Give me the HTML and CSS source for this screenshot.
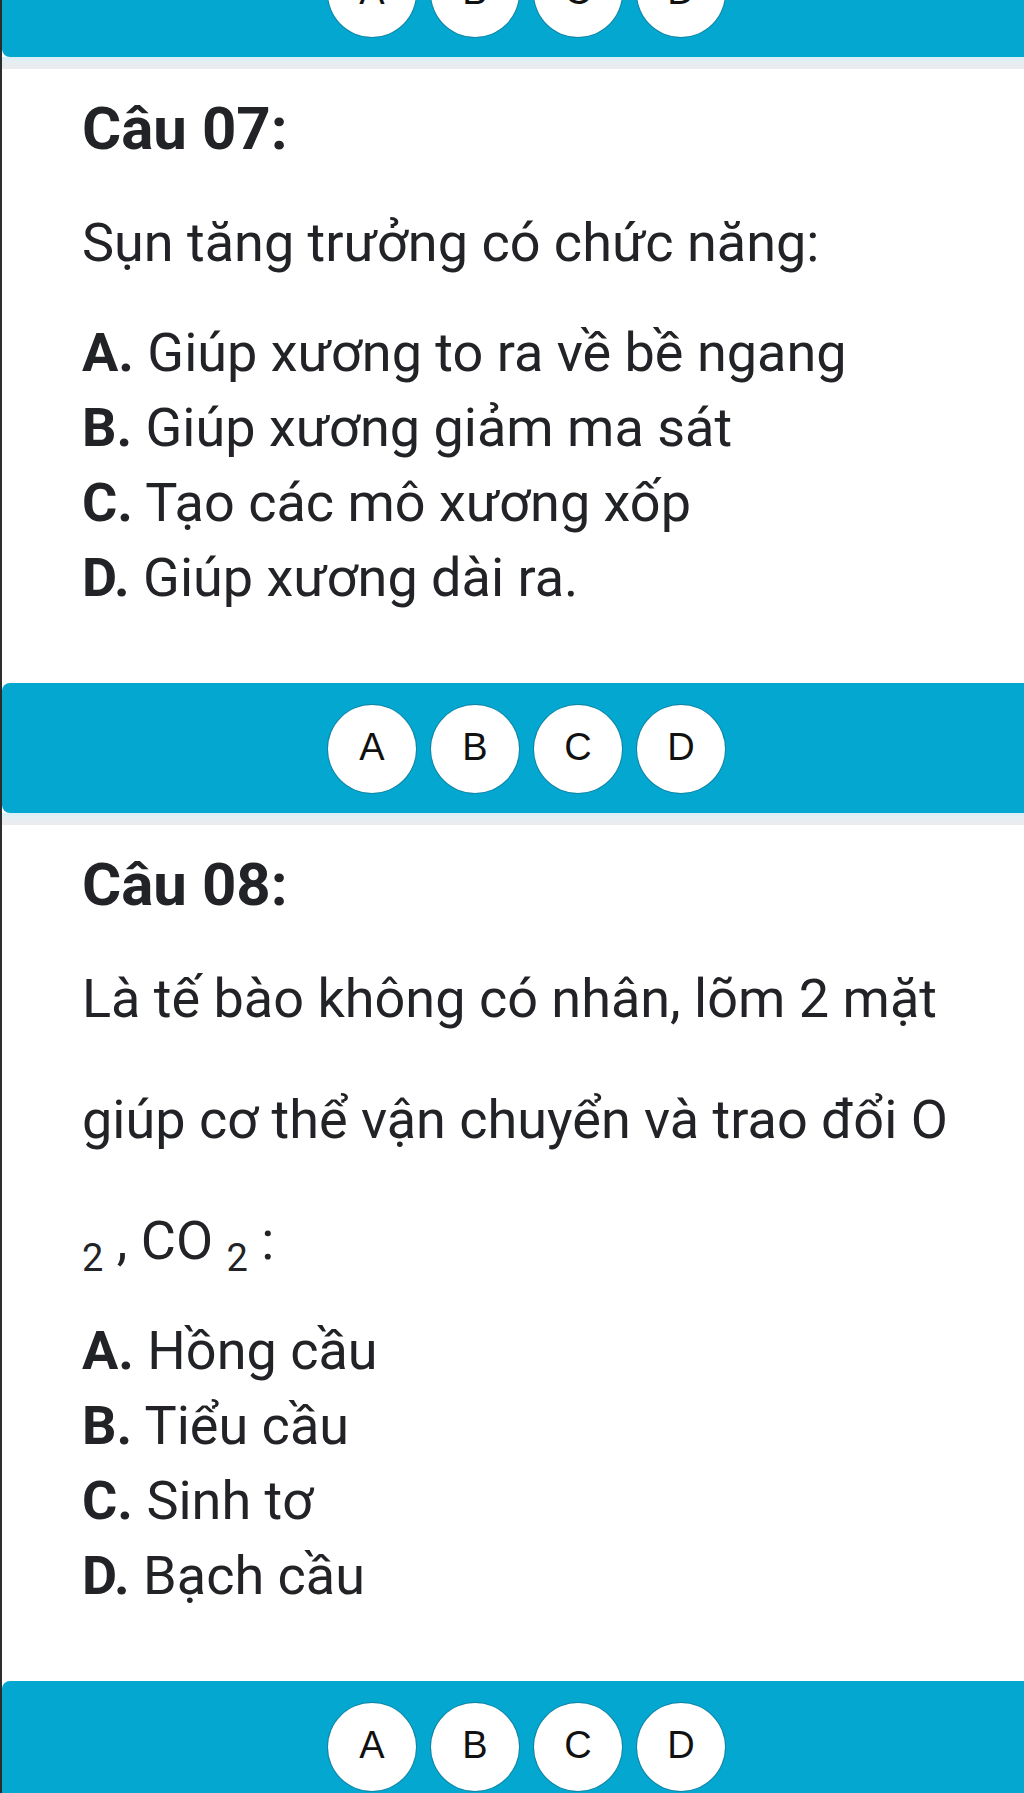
FILE: index.html
```html
<!DOCTYPE html>
<html lang="vi">
<head>
<meta charset="utf-8">
<title>Câu hỏi trắc nghiệm</title>
<link rel="stylesheet" href="styles.css">
</head>
<body>
<div class="page">
  <div class="answer-bar answer-bar--top">
    <span class="choice">A</span>
    <span class="choice">B</span>
    <span class="choice">C</span>
    <span class="choice">D</span>
  </div>
  <div class="answer-shadow"></div>

  <section class="question">
    <h2 class="question-title">Câu 07:</h2>
    <p class="question-text">Sụn tăng trưởng có chức năng:</p>
    <ul class="options">
      <li><b>A.</b> Giúp xương to ra về bề ngang</li>
      <li><b>B.</b> Giúp xương giảm ma sát</li>
      <li><b>C.</b> Tạo các mô xương xốp</li>
      <li><b>D.</b> Giúp xương dài ra.</li>
    </ul>
  </section>

  <div class="answer-bar">
    <span class="choice">A</span>
    <span class="choice">B</span>
    <span class="choice">C</span>
    <span class="choice">D</span>
  </div>
  <div class="answer-shadow"></div>

  <section class="question">
    <h2 class="question-title">Câu 08:</h2>
    <p class="question-text">Là tế bào không có nhân, lõm 2 mặt giúp cơ thể vận chuyển và trao đổi O <sub>2</sub> , CO <sub>2</sub> :</p>
    <ul class="options">
      <li><b>A.</b> Hồng cầu</li>
      <li><b>B.</b> Tiểu cầu</li>
      <li><b>C.</b> Sinh tơ</li>
      <li><b>D.</b> Bạch cầu</li>
    </ul>
  </section>

  <div class="answer-bar">
    <span class="choice">A</span>
    <span class="choice">B</span>
    <span class="choice">C</span>
    <span class="choice">D</span>
  </div>
  <div class="answer-shadow"></div>
</div>
</body>
</html>
```

FILE: styles.css
```css
html {
  overflow: hidden;
}

body {
  margin: 0;
  background: #ffffff;
  font-family: Roboto, "Noto Sans", sans-serif;
  color: #222326;
}

.page {
  border-left: 2px solid #2c2c2c;
  min-height: 1900px;
}

.answer-bar {
  display: flex;
  gap: 15px;
  height: 88px;
  padding: 22px 0 20px 326px;
  background: #03a7d0;
  border-radius: 8px 0 0 8px;
}

.answer-bar--top {
  margin-top: -73px;
}

.answer-shadow {
  height: 12px;
  background: linear-gradient(#d9eff7, #e6eef2 45%, #ebebee);
}

.choice {
  display: flex;
  align-items: center;
  justify-content: center;
  width: 88px;
  height: 88px;
  padding-bottom: 4px;
  box-sizing: border-box;
  border-radius: 50%;
  background: #ffffff;
  box-shadow: 0 0 0 1px rgba(40, 70, 85, 0.35);
  font-family: "Liberation Sans", Arial, sans-serif;
  font-size: 38px;
  color: #111111;
}

.question {
  padding: 25px 60px 68px 80px;
}

.question-title {
  margin: 0;
  font-size: 60px;
  line-height: 70px;
  font-weight: 700;
}

.question-text {
  margin: 18px 0 12px;
  font-size: 54px;
  line-height: 121px;
}

.question-text sub {
  font-size: 38px;
  line-height: 0;
}

.options {
  list-style: none;
  margin: 0;
  padding: 0;
  font-size: 54px;
  line-height: 75px;
}

.options b {
  font-weight: 700;
}
```
